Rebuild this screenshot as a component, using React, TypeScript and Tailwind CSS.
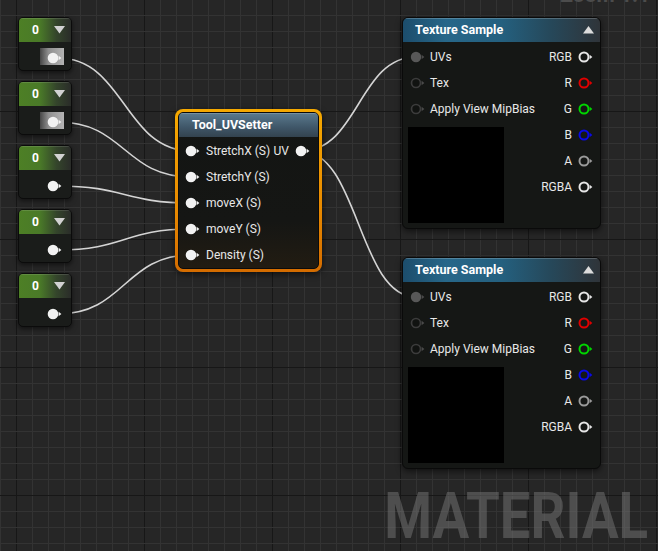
import React from 'react';

const W = 658;
const H = 551;

// wire endpoints: [x1, y1, x2, y2]
const wires: [number, number, number, number][] = [
  [58, 58, 191, 151],
  [58, 122, 191, 177],
  [58, 186, 191, 203],
  [58, 250, 191, 229],
  [58, 314, 191, 255],
  [301, 151, 416, 57],
  [301, 151, 416, 297],
];

function wirePath([x1, y1, x2, y2]: [number, number, number, number]) {
  const t = Math.max(30, (x2 - x1) * 0.5);
  return `M${x1} ${y1} C${x1 + t} ${y1}, ${x2 - t} ${y2}, ${x2} ${y2}`;
}

function Canvas() {
  const vx = Array.from({ length: Math.ceil(W / 16) + 1 }, (_, i) => i * 16);
  const hy = Array.from({ length: Math.ceil(H / 16) + 2 }, (_, i) => i * 16 - 1);
  return (
    <svg width={W} height={H} className="absolute inset-0">
      {vx.map(x => (
        <line key={`v${x}`} x1={x + 0.5} y1={0} x2={x + 0.5} y2={H} stroke={(x - 16) % 128 === 0 ? '#171717' : '#333333'} strokeWidth="1" />
      ))}
      {hy.map(y => (
        <line key={`h${y}`} x1={0} y1={y + 0.5} x2={W} y2={y + 0.5} stroke={(y - 111) % 128 === 0 ? '#171717' : '#333333'} strokeWidth="1" />
      ))}
      {wires.map((w, i) => (
        <path key={i} d={wirePath(w)} fill="none" stroke="#d4d4d4" strokeWidth="1.6" />
      ))}
    </svg>
  );
}

type PinKind = 'solid' | 'ring' | 'linked' | 'empty';

function Pin({ kind, color = '#f2f2f2' }: { kind: PinKind; color?: string }) {
  return (
    <svg width="16" height="12" viewBox="0 0 16 12" className="shrink-0">
      {kind === 'solid' && <circle cx="6" cy="6" r="5.3" fill={color} />}
      {kind === 'linked' && <circle cx="6" cy="6" r="5.2" fill="#585858" />}
      {kind === 'ring' && <circle cx="6" cy="6" r="4.5" fill="#151715" stroke={color} strokeWidth="2" />}
      {kind === 'empty' && <circle cx="6" cy="6" r="4.5" fill="#111311" stroke="#3c3c3c" strokeWidth="1.7" />}
      <path d="M11.6 3.8 L14.4 6 L11.6 8.2 Z" fill={kind === 'linked' || kind === 'empty' ? '#4a4a4a' : color} />
    </svg>
  );
}

function ConstNode({ pos, swatch }: { pos: string; swatch?: boolean }) {
  return (
    <div className={`absolute left-[18px] ${pos} flex h-[54px] w-[54px] flex-col overflow-hidden rounded-[5px] border border-[#0b0b0b] bg-[#1a1c1a] shadow-[0_2px_5px_rgba(0,0,0,0.55)]`}>
      <div className="flex h-[24px] shrink-0 items-center justify-between bg-[linear-gradient(to_right,#4d7f25,#4a7a28_40%,#34452b_72%,#2a2c29)] pl-[13px] pr-[6px] shadow-[inset_0_1px_0_rgba(255,255,255,0.12)]">
        <span className="text-[12px] font-bold leading-none text-white">0</span>
        <svg width="11" height="8" viewBox="0 0 11 8">
          <path d="M0 0 H11 L5.5 7.5 Z" fill="#d2d2d2" />
        </svg>
      </div>
      <div className="flex flex-1 items-start justify-end pr-[7px] pt-[6px]">
        <div className={`flex h-[17px] w-[24px] items-center justify-end pr-[1px] pt-[2px] ${swatch ? 'bg-[linear-gradient(to_right,#464646,#8e8e8e_35%,#b4b4b4)]' : ''}`}>
          <Pin kind="solid" />
        </div>
      </div>
    </div>
  );
}

const setterInputs = ['StretchX (S)', 'StretchY (S)', 'moveX (S)', 'moveY (S)', 'Density (S)'];

function UVSetter() {
  return (
    <div className="absolute left-[175px] top-[109px] h-[163px] w-[147px] rounded-[8px] bg-[linear-gradient(to_bottom,#f6a900,#e88a00_60%,#d46c00)] p-[3px] shadow-[0_2px_6px_rgba(0,0,0,0.6)]">
      <div className="flex h-full flex-col overflow-hidden rounded-[5px] border border-[#0b0b0b] bg-[linear-gradient(to_bottom,#131513,#151614_70%,#221c12)]">
        <div className="flex h-[24px] shrink-0 items-center bg-[linear-gradient(to_bottom,#5b7a8e,#3f5668_60%,#33434f)] pl-[13px] shadow-[inset_0_1px_0_rgba(255,255,255,0.18)]">
          <span className="text-[12.5px] font-bold text-white">Tool_UVSetter</span>
        </div>
        <div className="flex flex-col pt-[1px]">
          {setterInputs.map((label, i) => (
            <div key={label} className="flex h-[26px] items-center justify-between pl-[6px] pr-[7px]">
              <div className="flex items-center gap-[5px]">
                <Pin kind="solid" />
                <span className="text-[12px] text-[#e8e8e8]">{label}</span>
              </div>
              {i === 0 && (
                <div className="flex items-center gap-[6px]">
                  <span className="text-[12px] text-[#e8e8e8]">UV</span>
                  <Pin kind="solid" />
                </div>
              )}
            </div>
          ))}
        </div>
      </div>
    </div>
  );
}

const outputs: { label: string; color: string }[] = [
  { label: 'RGB', color: '#e6e6e6' },
  { label: 'R', color: '#e00000' },
  { label: 'G', color: '#00d400' },
  { label: 'B', color: '#0a0ae6' },
  { label: 'A', color: '#9a9a9a' },
  { label: 'RGBA', color: '#e6e6e6' },
];

function TextureSample({ pos }: { pos: string }) {
  return (
    <div className={`absolute left-[402px] ${pos} flex h-[212px] w-[199px] flex-col overflow-hidden rounded-[6px] border border-[#0a0a0a] bg-[#151715] shadow-[0_2px_6px_rgba(0,0,0,0.6)]`}>
      <div className="flex h-[24px] shrink-0 items-center justify-between bg-[linear-gradient(to_right,#1c4d6c,#276789_22%,#24607f_50%,#26485a_75%,#2f3439)] pl-[12px] pr-[6px] shadow-[inset_0_1px_0_rgba(255,255,255,0.2)]">
        <span className="text-[12.5px] font-bold text-white">Texture Sample</span>
        <svg width="11" height="8" viewBox="0 0 11 8">
          <path d="M0 7.5 H11 L5.5 0 Z" fill="#dcdcdc" />
        </svg>
      </div>
      <div className="flex flex-1 justify-between pb-[5px] pt-[2px]">
        <div className="flex flex-col pl-[5px]">
          {['UVs', 'Tex', 'Apply View MipBias'].map((label, i) => (
            <div key={label} className="flex h-[26px] items-center gap-[4px] pl-[2px]">
              <Pin kind={i === 0 ? 'linked' : 'empty'} />
              <span className="text-[12px] text-[#e8e8e8]">{label}</span>
            </div>
          ))}
          <div className="mt-[5px] h-[96px] w-[96px] bg-black" />
        </div>
        <div className="flex flex-col pr-[6px]">
          {outputs.map(o => (
            <div key={o.label} className="flex h-[26px] items-center justify-end gap-[6px]">
              <span className="text-[12px] text-[#e8e8e8]">{o.label}</span>
              <Pin kind="ring" color={o.color} />
            </div>
          ))}
        </div>
      </div>
    </div>
  );
}

export default function App() {
  return (
    <div className="relative h-[551px] w-[658px] overflow-hidden bg-[#262626] font-['Roboto','Noto_Sans',sans-serif]">
      <Canvas />

      <span className="absolute right-[8px] top-[-20px] text-[21px] font-bold text-[#4c4c4c]">Zoom 1:1</span>

      <ConstNode pos="top-[17px]" swatch />
      <ConstNode pos="top-[81px]" swatch />
      <ConstNode pos="top-[145px]" />
      <ConstNode pos="top-[209px]" />
      <ConstNode pos="top-[273px]" />

      <UVSetter />

      <TextureSample pos="top-[17px]" />
      <TextureSample pos="top-[257px]" />

      <div className="absolute right-[10px] top-[484px] w-max origin-right scale-x-[0.84] whitespace-nowrap text-[65px] font-bold leading-none text-[rgba(118,118,118,0.5)]">
        MATERIAL
      </div>
    </div>
  );
}
